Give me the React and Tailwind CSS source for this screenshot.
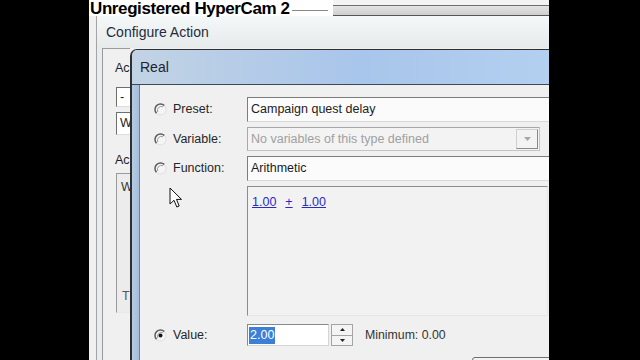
import React from "react";

const sans = { fontFamily: '"Liberation Sans", Arial, sans-serif' };

function Radio({ checked }) {
  return (
    <svg width="13" height="13" viewBox="0 0 13 13" className="shrink-0">
      <circle cx="6.5" cy="6.5" r="5.5" fill="#f5f5f5" />
      <path d="M10.4 2.6 A5.5 5.5 0 0 0 2.6 10.4" stroke="#5e5e5e" strokeWidth="1.5" fill="none" />
      <path d="M2.6 10.4 A5.5 5.5 0 0 0 10.4 2.6" stroke="#e4e4e4" strokeWidth="1.3" fill="none" />
      <path d="M9 3.8 A3.9 3.9 0 0 0 3.8 9" stroke="#9c9c9c" strokeWidth="1" fill="none" />
      {checked && <circle cx="6.5" cy="6.5" r="2" fill="#151515" />}
    </svg>
  );
}

function OptionLabel({ checked, children }) {
  return (
    <div className="w-[107px] shrink-0 flex items-center pl-[14px] gap-[6px]">
      <Radio checked={checked} />
      <span className="text-[12.5px] text-[#262626]">{children}</span>
    </div>
  );
}

function Cursor() {
  return (
    <svg width="14" height="22" viewBox="0 0 14 22" className="absolute left-[80px] top-[187px]">
      <path d="M1 1 L1 17 L5 13.3 L7.8 20 L10.2 19 L7.5 12.4 L12.5 12.4 Z" fill="#fff" stroke="#111" strokeWidth="1" strokeLinejoin="round" />
    </svg>
  );
}

export default function App() {
  return (
    <div className="w-[640px] h-[360px] bg-black relative overflow-hidden" style={sans}>
      <div className="absolute left-[89px] top-0 w-[460px] h-[360px] overflow-hidden bg-[#f0f0f0]">
        {/* window edge behind the recorder label */}
        <div className="absolute top-0 left-0 right-0">
          <div className="h-[5px] bg-[#f4f4f4]" />
          <div className="h-px bg-[#6e6e6e]" />
          <div className="h-[9px] bg-gradient-to-b from-[#e4e4e4] to-[#cfcfcf]" />
          <div className="h-px bg-[#555]" />
        </div>

        {/* Configure Action window */}
        <div className="absolute left-[7px] top-[16px] w-[470px] h-[360px] border-l border-[#a4a4a4] flex flex-col">
          <div className="h-[32px] shrink-0 flex items-center pl-[9px] bg-gradient-to-b from-[#f5f8f9] to-[#e6eaeb]">
            <span className="text-[14px] text-[#1e2c40]">Configure Action</span>
          </div>
          <div className="flex flex-1">
            <div className="w-[5px] bg-[#e8ecee]" />
            <div className="w-[28px] overflow-hidden border-l border-t border-[#9a9a9a] bg-[#f0f0f0] pt-[12px] pl-[13px] flex flex-col items-start">
              <div className="h-[14px] leading-[14px] text-[12.5px] text-[#222] ml-[-1px]">Ac</div>
              <div className="mt-[12px] h-[20px] w-[200px] shrink-0 bg-white border-l border-t border-[#6f6f6f] border-r border-b border-r-[#ddd] border-b-[#ddd] pl-[3px] text-[12.5px] leading-[18px] text-[#222]">-</div>
              <div className="mt-[5px] h-[23px] w-[200px] shrink-0 bg-white border-l border-t border-[#6f6f6f] border-r border-b border-r-[#ddd] border-b-[#ddd] pl-[3px] text-[12.5px] leading-[21px] text-[#222]">W</div>
              <div className="mt-[18px] h-[14px] leading-[14px] text-[12.5px] text-[#222] ml-[-1px]">Ac</div>
              <div className="mt-[6px] h-[140px] w-[200px] shrink-0 bg-[#ececec] border-l border-t border-[#9a9a9a] border-r border-b border-r-[#e8e8e8] border-b-[#e8e8e8] pl-[4px] pt-[4px] flex flex-col text-[12.5px] text-[#333]">
                <span>W</span>
                <span className="mt-[90px] pl-[1px] text-[#555]">T</span>
              </div>
            </div>
          </div>
        </div>

        {/* recorder watermark */}
        <div className="absolute top-0 left-0 w-[244px] h-[16px] bg-white flex items-start">
          <span className="text-[17px] font-bold leading-[16px] tracking-[-0.4px] text-black mt-[1px] ml-[1px]">Unregistered HyperCam 2</span>
          <div className="mt-[10px] ml-[2px] h-px w-[36px] bg-[#888]" />
        </div>

        {/* Real dialog */}
        <div className="absolute left-[41px] top-[49px] w-[460px] h-[330px] border-l-2 border-t border-[#2f2f2f] rounded-tl-[7px] overflow-hidden flex flex-col">
          <div className="h-[35px] shrink-0 flex items-center pl-[8px] border-b border-[#3c4a58] bg-gradient-to-r from-[#c2d3e4] via-[#a8c5eb] to-[#b6d2f1]">
            <span className="text-[14px] text-[#1d2430]">Real</span>
          </div>
          <div className="flex flex-1">
            <div className="w-[7px] bg-gradient-to-r from-[#b6cbe2] to-[#a4bedd]" />
            <div className="flex-1 border-l border-[#6f8296] bg-[#f0f0f0] pt-[12px] flex flex-col">
              <div className="flex h-[25px]">
                <OptionLabel>Preset:</OptionLabel>
                <div className="w-[310px] h-[25px] bg-[#fbfbfb] border-l border-t border-[#7d7d7d] border-b border-b-[#d8d8d8] pl-[3px] text-[12.5px] leading-[23px] text-[#1c1c1c]">
                  Campaign quest delay
                </div>
              </div>
              <div className="flex h-[24px] mt-[5px]">
                <OptionLabel>Variable:</OptionLabel>
                <div className="w-[293px] h-[24px] bg-[#f3f3f3] border border-[#c4c4c4] border-l-[#a8a8a8] border-t-[#a8a8a8] flex items-center">
                  <span className="flex-1 pl-[3px] text-[12.5px] text-[#a0a0a0]">No variables of this type defined</span>
                  <div className="w-[22px] h-[20px] mr-px border border-[#d0d0d0] border-r-[#8a8a8a] border-b-[#8a8a8a] flex items-center justify-center">
                    <svg width="7" height="4" viewBox="0 0 7 4"><path d="M0 0 L7 0 L3.5 4 Z" fill="#a8a8a8" /></svg>
                  </div>
                </div>
              </div>
              <div className="flex h-[25px] mt-[5px]">
                <OptionLabel>Function:</OptionLabel>
                <div className="w-[310px] h-[25px] bg-[#fbfbfb] border-l border-t border-[#7d7d7d] border-b border-b-[#d8d8d8] pl-[3px] text-[12.5px] leading-[23px] text-[#1c1c1c]">
                  Arithmetic
                </div>
              </div>
              <div className="flex mt-[5px]">
                <div className="w-[107px] shrink-0" />
                <div className="w-[301px] h-[130px] bg-[#f2f2f2] border border-[#e6e6e6] border-l-[#8c8c8c] border-t-[#8c8c8c] pl-[4px] pt-[6px] text-[12.5px] text-[#2a2ac4] flex items-start gap-[9px]">
                  <span className="underline">1.00</span>
                  <span className="underline">+</span>
                  <span className="underline">1.00</span>
                </div>
              </div>
              <div className="flex h-[22px] mt-[8px] items-center">
                <OptionLabel checked>Value:</OptionLabel>
                <div className="w-[82px] h-[22px] bg-white border border-[#d4d4d4] border-l-[#8a8a8a] border-t-[#8a8a8a] flex items-center pl-px">
                  <span className="bg-[#3b80d6] text-white text-[12.5px] leading-[17px] px-px">2.00</span>
                </div>
                <div className="ml-[2px] w-[22px] h-[22px] border border-[#a4a4a4] flex flex-col bg-[#f4f4f4]">
                  <div className="flex-1 flex items-center justify-center border-b border-[#a4a4a4]">
                    <svg width="5" height="3" viewBox="0 0 5 3"><path d="M0 3 L5 3 L2.5 0 Z" fill="#222" /></svg>
                  </div>
                  <div className="flex-1 flex items-center justify-center">
                    <svg width="5" height="3" viewBox="0 0 5 3"><path d="M0 0 L5 0 L2.5 3 Z" fill="#222" /></svg>
                  </div>
                </div>
                <span className="ml-[12px] text-[12.3px] text-[#333]">Minimum: 0.00</span>
              </div>
              <div className="ml-[332px] mt-[11px] w-[100px] h-[24px] border border-[#6e6e6e] rounded-[3px] bg-gradient-to-b from-[#f4f4f4] to-[#dcdcdc]" />
            </div>
          </div>
        </div>

        <Cursor />
      </div>
    </div>
  );
}
